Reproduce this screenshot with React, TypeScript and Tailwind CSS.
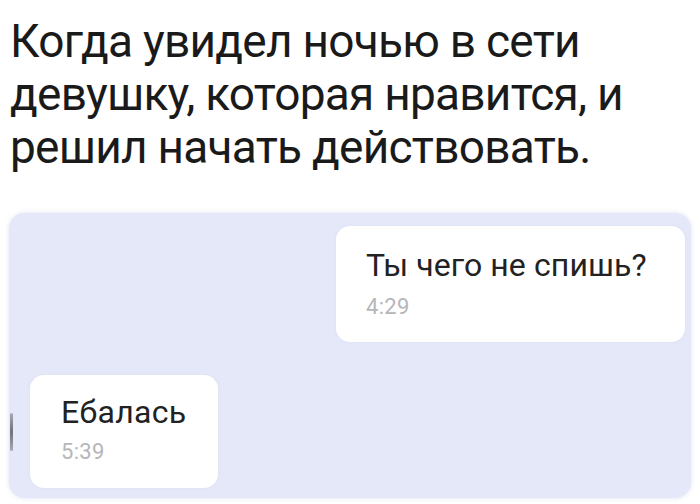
export default function App() {
  return (
    <div className="w-[700px] h-[504px] bg-white overflow-hidden flex flex-col" style={{ fontFamily: "Roboto, 'Liberation Sans', sans-serif" }}>
      <div className="pl-[10px] pt-[15px] text-[46px] leading-[53px] text-[#1a1a1a] tracking-[-0.75px]">
        <div>Когда увидел ночью в сети</div>
        <div>девушку, которая нравится, и</div>
        <div>решил начать действовать.</div>
      </div>
      <div className="relative mt-[39px] mx-[9px] h-[285px] rounded-[16px] bg-[#e5e8f8] shadow-[0_0_4px_rgba(200,205,235,0.6)] flex flex-col">
        <div className="absolute left-[1px] top-[200px] w-[3px] h-[38px] rounded-full bg-gradient-to-b from-[#9a9aa6] via-[#55555e] to-[#9a9aa6] opacity-80" />
        <div className="self-end mt-[13px] mr-[6px] w-[349px] h-[116px] rounded-[14px] bg-white shadow-[0_0_3px_rgba(220,222,240,0.9)] pt-[20px] pl-[30px] flex flex-col">
          <div className="text-[32px] leading-[38px] text-[#222] tracking-[0.1px]">Ты чего не спишь?</div>
          <div className="mt-[10px] text-[22px] leading-[26px] text-[#b6b6ba] tracking-[0.3px]">4:29</div>
        </div>
        <div className="self-start mt-[33px] ml-[21px] w-[188px] h-[113px] rounded-[14px] bg-white shadow-[0_0_3px_rgba(220,222,240,0.9)] pt-[18px] pl-[31px] flex flex-col">
          <div className="text-[32px] leading-[38px] text-[#222] tracking-[0.3px]">Ебалась</div>
          <div className="mt-[8px] text-[22px] leading-[26px] text-[#b6b6ba] tracking-[0.3px]">5:39</div>
        </div>
      </div>
    </div>
  );
}
